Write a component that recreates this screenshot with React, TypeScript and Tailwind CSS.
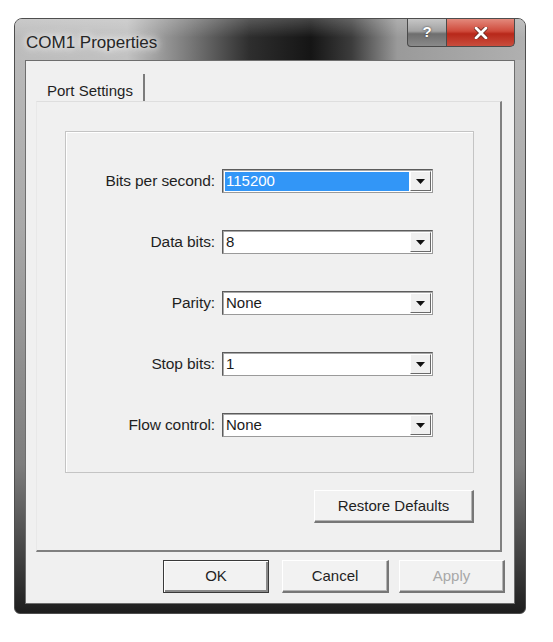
import React from 'react';

const font = { fontFamily: '"Liberation Sans", Arial, sans-serif' };

const rows = [
  { label: 'Bits per second:', value: '115200', selected: true },
  { label: 'Data bits:', value: '8' },
  { label: 'Parity:', value: 'None' },
  { label: 'Stop bits:', value: '1' },
  { label: 'Flow control:', value: 'None' },
];

function DownArrow() {
  return (
    <svg width="9" height="5" viewBox="0 0 9 5">
      <path d="M0 0 H9 L4.5 5 Z" fill="#111" />
    </svg>
  );
}

function Combo({ value, selected }: { value: string; selected?: boolean }) {
  return (
    <div className="flex h-[24px] w-[211px] border border-[#9a9a9a] border-t-[#5c5c5c] border-l-[#5c5c5c] bg-white shadow-[inset_1px_1px_0_#a8a8a8]">
      <div className="flex flex-1 items-center pl-[2px] pt-[1px]">
        <span
          className={
            selected
              ? 'flex h-[19px] w-full items-center bg-[#3296f7] pl-[1px] text-[15px] text-white'
              : 'pl-[1px] text-[15px] text-[#1a1a1a]'
          }
        >
          {value}
        </span>
      </div>
      <div className="my-[1px] mr-[1px] ml-[1px] flex w-[21px] items-center justify-center border border-t-white border-l-white border-r-[#6a6a6a] border-b-[#6a6a6a] bg-[#f0f0f0]">
        <DownArrow />
      </div>
    </div>
  );
}

function Button({
  children,
  width,
  isDefault,
  disabled,
}: {
  children: React.ReactNode;
  width: string;
  isDefault?: boolean;
  disabled?: boolean;
}) {
  const base = 'flex h-[33px] items-center justify-center bg-[#f2f2f2] text-[15px]';
  const edge = isDefault
    ? 'border border-[#3a3a3a] shadow-[inset_1px_1px_0_#fff,inset_-2px_-2px_0_#8a8a8a]'
    : 'border-t border-l border-t-white border-l-white border-r-2 border-b-2 border-r-[#777] border-b-[#777] shadow-[inset_-1px_-1px_0_#b4b4b4]';
  return (
    <div className={`${base} ${edge} ${width} ${disabled ? 'text-[#a8a8a8]' : 'text-[#1f1f1f]'}`}>
      {children}
    </div>
  );
}

export default function App() {
  return (
    <div className="min-h-[642px] w-[553px] bg-white pt-[18px] pl-[14px]" style={font}>
      <div className="flex h-[596px] w-[512px] flex-col overflow-hidden rounded-t-[8px] rounded-b-[6px] border border-[#4e4e4e] bg-[linear-gradient(180deg,#bdbdbd_0%,#a9a9a9_35%,#7d7d7d_75%,#1e1e1e_100%)]">
        {/* title bar */}
        <div className="flex h-[41px] shrink-0 items-start bg-[linear-gradient(180deg,rgba(255,255,255,0.2)_0%,rgba(255,255,255,0)_45%),linear-gradient(90deg,#bcbcbc_0%,#c2c2c2_22%,#7a7a7a_34%,#2e2e2e_46%,#151515_58%,#3c3c3c_66%,#9a9a9a_75%,#b0b0b0_100%)]">
          <div className="pt-[11px] pl-[11px] text-[17px] text-[#262626] [text-shadow:0_0_6px_#fff,0_0_12px_#fff]">
            COM1 Properties
          </div>
          <div className="mr-[10px] ml-auto flex h-[28px]">
            <div className="flex w-[40px] items-center justify-center rounded-bl-[4px] border border-t-0 border-[#4a4a4a] bg-[linear-gradient(180deg,#c6c6c6_0%,#a2a2a2_45%,#6e6e6e_55%,#8a8a8a_100%)] text-[15px] font-bold text-white [text-shadow:0_0_2px_#333]">
              ?
            </div>
            <div className="flex w-[68px] items-center justify-center rounded-br-[5px] border border-t-0 border-l-0 border-[#4a4a4a] bg-[linear-gradient(180deg,#e3897c_0%,#cf4a3b_45%,#b8281a_55%,#c94d3d_100%)]">
              <svg width="14" height="12" viewBox="0 0 14 12">
                <path d="M2 1 L12 11 M12 1 L2 11" stroke="#6b2a22" strokeWidth="4.5" strokeLinecap="round" />
                <path d="M2 1 L12 11 M12 1 L2 11" stroke="#fff" strokeWidth="2.8" strokeLinecap="round" />
              </svg>
            </div>
          </div>
        </div>

        {/* client area */}
        <div className="mx-[10px] mb-[9px] flex flex-1 flex-col border border-[#6e6e6e] bg-[#f0f0f0] pt-[9px] pl-[10px]">
          {/* tab strip */}
          <div className="flex h-[31px]">
            <div className="mt-[4px] flex w-[109px] items-start border-r-2 border-r-[#7c7c7c] pt-[6px] pl-[11px] text-[15px] text-[#1f1f1f]">
              Port Settings
            </div>
          </div>

          {/* tab panel */}
          <div className="mr-[12px] flex h-[451px] flex-col border-t border-l border-t-[#dedede] border-l-[#e8e8e8] border-r-2 border-b-2 border-r-[#808080] border-b-[#808080] pt-[29px] pl-[28px] pr-[26px]">
            <div className="flex h-[342px] flex-col gap-[37px] border border-[#c4c4c4] pt-[37px] shadow-[inset_1px_1px_0_#fff]">
              {rows.map((row) => (
                <div key={row.label} className="grid grid-cols-[149px_211px] items-center gap-x-[7px]">
                  <div className="text-right text-[15.5px] tracking-[-0.1px] text-[#1f1f1f]">{row.label}</div>
                  <Combo value={row.value} selected={row.selected} />
                </div>
              ))}
            </div>
            <div className="mt-[17px] flex justify-end">
              <Button width="w-[160px]">Restore Defaults</Button>
            </div>
          </div>

          {/* dialog buttons */}
          <div className="mt-[8px] flex justify-end pr-[9px]">
            <div className="mr-[13px]">
              <Button width="w-[106px]" isDefault>
                OK
              </Button>
            </div>
            <div className="mr-[10px]">
              <Button width="w-[107px]">Cancel</Button>
            </div>
            <Button width="w-[106px]" disabled>
              Apply
            </Button>
          </div>
        </div>
      </div>
    </div>
  );
}
